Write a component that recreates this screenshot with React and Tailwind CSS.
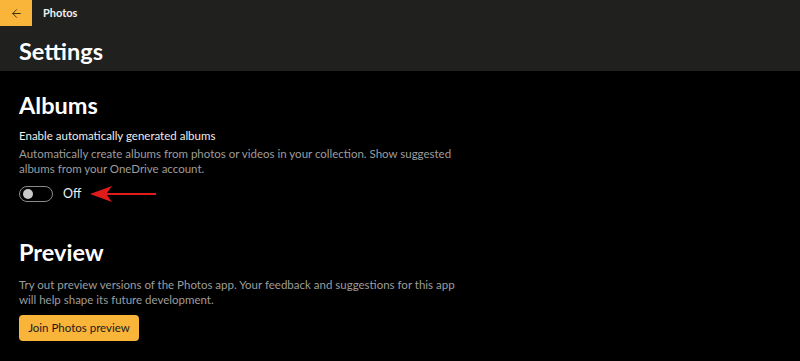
import { ArrowLeft } from 'lucide-react';

function Toggle() {
  return (
    <div className="flex items-center">
      <div className="w-[34px] h-[16px] rounded-full border border-[#8a8a8a] flex items-center px-[3px]">
        <div className="w-[10px] h-[10px] rounded-full bg-[#c9c9c9]"></div>
      </div>
      <span className="ml-[10px] text-[12.5px] text-[#f0f0f0]">Off</span>
      {/* red annotation arrow */}
      <svg width="68" height="18" viewBox="0 0 68 18" className="ml-[9px]">
        <path d="M0 9 L22 1 L17 8 L66 8 L66 10 L17 10 L22 17 Z" fill="#e01b1b" />
      </svg>
    </div>
  );
}

export default function App() {
  return (
    <div className="w-[800px] h-[361px] bg-black overflow-hidden" style={{ fontFamily: 'Lato, "Noto Sans", sans-serif' }}>
      {/* Title bar + page header */}
      <div className="bg-[#20201e] h-[71px]">
        <div className="flex items-center h-[26px]">
          <div className="w-[32px] h-[26px] bg-[#f9b43a] flex items-center justify-center">
            <ArrowLeft size={13} strokeWidth={1.75} color="#3b2a0a" />
          </div>
          <span className="ml-[11px] text-[11px] font-bold text-[#f0f0f0]">Photos</span>
        </div>
        <h1 className="mt-[9px] ml-[19px] text-[23.5px] leading-[32px] font-bold text-white">Settings</h1>
      </div>

      <div className="px-[19px]">
        {/* Albums */}
        <h2 className="mt-[18px] text-[23.5px] leading-[32px] font-bold text-white">Albums</h2>
        <p className="mt-[7px] text-[11.5px] leading-[16px] text-[#ededed]">Enable automatically generated albums</p>
        <p className="mt-[2px] text-[11.5px] leading-[15px] text-[#9d9d9d] w-[445px]">
          Automatically create albums from photos or videos in your collection. Show suggested albums from your OneDrive account.
        </p>
        <div className="mt-[9px]">
          <Toggle />
        </div>

        {/* Preview */}
        <h2 className="mt-[32px] text-[23.5px] leading-[32px] font-bold text-white">Preview</h2>
        <p className="mt-[9px] text-[11.5px] leading-[15px] text-[#9d9d9d] w-[445px]">
          Try out preview versions of the Photos app. Your feedback and suggestions for this app will help shape its future development.
        </p>
        <button className="mt-[8px] w-[120px] h-[26px] rounded-[4px] bg-[#f9b43a] text-[11.5px] text-[#1a1a1a]">
          Join Photos preview
        </button>
      </div>
    </div>
  );
}
